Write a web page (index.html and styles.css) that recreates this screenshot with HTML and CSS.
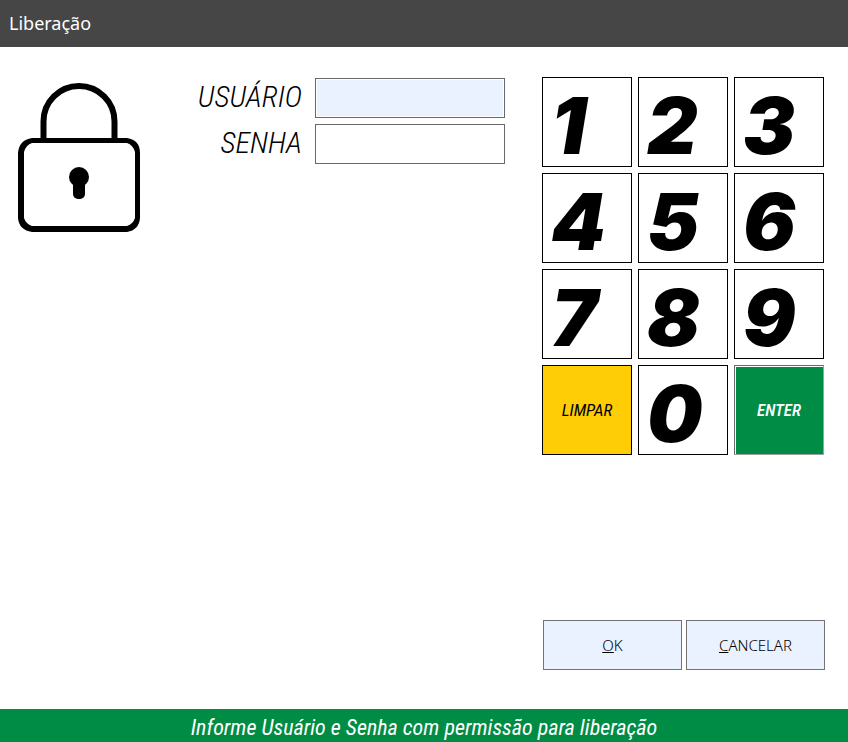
FILE: index.html
```html
<!DOCTYPE html>
<html lang="pt-BR">
<head>
<meta charset="utf-8">
<title>Liberação</title>
<link rel="stylesheet" href="styles.css">
</head>
<body>
<header class="titlebar"><h1>Liberação</h1></header>
<form class="content">
  <svg class="lock" viewBox="0 0 160 160" aria-hidden="true">
    <path fill="none" stroke="#000" stroke-width="6" d="M35.500 62V44.500A35.500 35.500 0 0 1 106.500 44.500V62"/>
    <path fill-rule="evenodd" d="M24 61H119Q132 63 132 76V141Q131 153 119 155H24Q11 153 10 141V76Q11 63 24 61ZM24 66Q18 68 16 75V141Q18 147 24 149H119Q125 147 127 141V75Q125 68 119 66Z"/>
    <circle cx="71" cy="100" r="10"/>
    <rect x="65" y="102" width="12" height="20" rx="5"/>
  </svg>
  <div class="fields">
    <label for="user">USUÁRIO</label>
    <input id="user" class="field active" type="text">
    <label for="password">SENHA</label>
    <input id="password" class="field" type="password">
  </div>
  <div class="side">
    <div class="keypad">
      <button type="button" class="key">1</button>
      <button type="button" class="key">2</button>
      <button type="button" class="key">3</button>
      <button type="button" class="key">4</button>
      <button type="button" class="key">5</button>
      <button type="button" class="key">6</button>
      <button type="button" class="key">7</button>
      <button type="button" class="key">8</button>
      <button type="button" class="key">9</button>
      <button type="button" class="key word clear">LIMPAR</button>
      <button type="button" class="key">0</button>
      <button type="button" class="key word enter">ENTER</button>
    </div>
    <div class="actions">
      <button type="button" class="action"><u>O</u>K</button>
      <button type="button" class="action"><u>C</u>ANCELAR</button>
    </div>
  </div>
</form>
<footer class="status">Informe Usuário e Senha com permissão para liberação</footer>
</body>
</html>
```

FILE: styles.css
```css
* { box-sizing: border-box; }

body {
  margin: 0;
  min-height: 100vh;
  display: flex;
  flex-direction: column;
  background: #fff;
  color: #000;
  font-family: "Noto Sans", sans-serif;
}

.titlebar {
  padding: 11px 9px 12px;
  background: #464646;
  color: #fff;
}

.titlebar h1 {
  margin: 0;
  font-size: 18px;
  line-height: 24px;
  font-weight: 400;
}

.content {
  flex: 1;
  display: flex;
  align-items: stretch;
  padding: 30px 24px 39px 8px;
}

.lock {
  width: 160px;
  height: 160px;
  flex: none;
}

.fields {
  flex: 1;
  display: grid;
  grid-template-columns: 1fr 190px;
  grid-auto-rows: 40px;
  gap: 6px 13px;
  padding-top: 1px;
  align-content: start;
}

.fields label {
  justify-self: end;
  font: italic 300 30px/38px "Roboto Condensed", Roboto, sans-serif;
}

.field {
  width: 100%;
  padding: 0 8px;
  border: 1px solid #696969;
  border-radius: 0;
  background: #fff;
  font-size: 20px;
}

.field.active {
  background: #eaf1ff;
  box-shadow: inset 0 0 0 1px #fff;
}

.side {
  display: flex;
  flex-direction: column;
  justify-content: space-between;
  margin-left: 37px;
}

.keypad {
  display: grid;
  grid-template-columns: repeat(3, 90px);
  grid-auto-rows: 90px;
  gap: 6px;
}

.key {
  padding: 8px 0 0 8px;
  border: 1px solid #000;
  background: #fff;
  color: #000;
  text-align: left;
  font: italic 900 78px/80px Inter, sans-serif;
}

.key.word {
  padding: 0;
  text-align: center;
  font: italic 17px/24px "Roboto Condensed", Roboto, sans-serif;
}

.key.clear { background: #ffcd05; }

.key.enter {
  border-color: #696969 #a0a0a0 #a0a0a0 #696969;
  background: #008c44;
  box-shadow: inset 1px 1px 0 #fff;
  color: #fff;
  font-weight: 500;
}

.actions {
  display: grid;
  grid-template-columns: 1fr 1fr;
  gap: 4px;
  margin: 0 -1px 0 1px;
}

.action {
  height: 50px;
  padding: 0;
  border: 1px solid #737373;
  background: #eaf1ff;
  color: #000;
  font: 300 15px/24px "Noto Sans", sans-serif;
}

.status {
  padding: 6px 8px 1px;
  background: #008c44;
  color: #fff;
  text-align: center;
  font: italic 22px/26px "Roboto Condensed", Roboto, sans-serif;
}
```
